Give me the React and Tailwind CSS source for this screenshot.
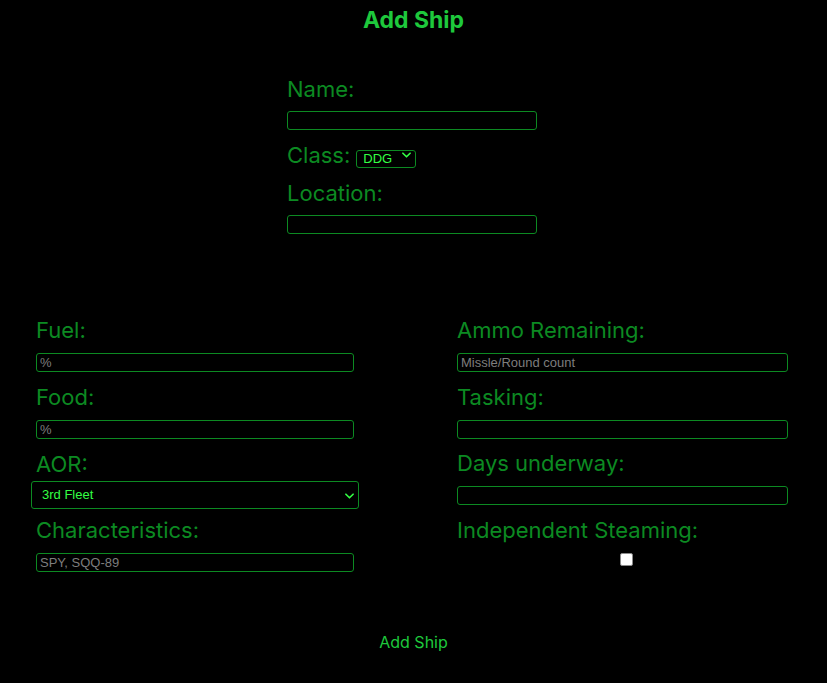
import React from "react";

const Field = ({ label, placeholder, top = "mt-[12px]", gap = "mt-[10px]" }) => (
  <div className={top}>
    <label className="block text-[22px] leading-[26px] text-[#0c8a22]">{label}</label>
    <input
      type="text"
      placeholder={placeholder}
      className={`${gap} block w-full h-[19px] bg-black border border-[#0c8a22] rounded-[3px] px-[3px] font-['Liberation_Sans',sans-serif] text-[13px] text-[#33ff44] placeholder:text-[#7d7d7d] outline-none`}
    />
  </div>
);

const Chevron = ({ className }) => (
  <svg viewBox="0 0 10 6" className={className} fill="none" stroke="#33ff44" strokeWidth="1.8" strokeLinecap="round" strokeLinejoin="round">
    <path d="M1 1l4 4 4-4" />
  </svg>
);

export default function App() {
  return (
    <div className="min-h-[683px] bg-black font-['Inter','Liberation_Sans',sans-serif]">
      <h1 className="pt-[8px] text-center text-[23px] leading-[24px] font-bold text-[#1ec83c]">Add Ship</h1>

      {/* ship basics */}
      <div className="w-[250px] ml-[287px] pt-[44px]">
        <Field label="Name:" top="mt-0" gap="mt-[9px]" />
        <div className="mt-[10px] flex items-center gap-[6px]">
          <span className="text-[22px] leading-[26px] text-[#0c8a22]">Class:</span>
          <div className="relative mt-[5px]">
            <select className="appearance-none w-[60px] h-[18px] bg-black border border-[#0c8a22] rounded-[3px] pl-[6px] font-['Liberation_Sans',sans-serif] text-[13px] leading-[16px] text-[#33ff44] outline-none">
              <option>DDG</option>
              <option>CG</option>
              <option>LHD</option>
            </select>
            <Chevron className="absolute right-[5px] top-[7px] w-[9px] h-[6px] pointer-events-none" />
          </div>
        </div>
        <Field label="Location:" top="mt-[11px]" gap="mt-[9px]" />
      </div>

      {/* status columns */}
      <div className="flex pl-[36px] gap-[103px] pt-[83px]">
        <div className="w-[318px]">
          <Field label="Fuel:" placeholder="%" top="mt-0" />
          <Field label="Food:" placeholder="%" />
          <div className="mt-[12px]">
            <label className="block text-[22px] leading-[26px] text-[#0c8a22]">AOR:</label>
            <div className="relative mt-[4px] -mx-[5px]">
              <select className="appearance-none block w-[328px] h-[28px] bg-black border border-[#0c8a22] rounded-[3px] pl-[10px] font-['Liberation_Sans',sans-serif] text-[13px] text-[#33ff44] outline-none">
                <option>3rd Fleet</option>
                <option>5th Fleet</option>
                <option>6th Fleet</option>
                <option>7th Fleet</option>
              </select>
              <Chevron className="absolute right-[5px] top-[12px] w-[9px] h-[6px] pointer-events-none" />
            </div>
          </div>
          <Field label="Characteristics:" placeholder="SPY, SQQ-89" top="mt-[8px]" />
        </div>

        <div className="w-[331px]">
          <Field label="Ammo Remaining:" placeholder="Missle/Round count" top="mt-0" />
          <Field label="Tasking:" />
          <Field label="Days underway:" top="mt-[11px]" />
          <div className="mt-[12px]">
            <label className="block text-[22px] leading-[26px] text-[#0c8a22]">Independent Steaming:</label>
            <input
              type="checkbox"
              className="appearance-none block mt-[10px] ml-[163px] w-[13px] h-[13px] bg-white border border-[#8a8a8a] rounded-[2px]"
            />
          </div>
        </div>
      </div>

      <div className="pt-[60px] flex justify-center">
        <button className="text-[16px] leading-[20px] text-[#1ec83c] bg-transparent">Add Ship</button>
      </div>
    </div>
  );
}
